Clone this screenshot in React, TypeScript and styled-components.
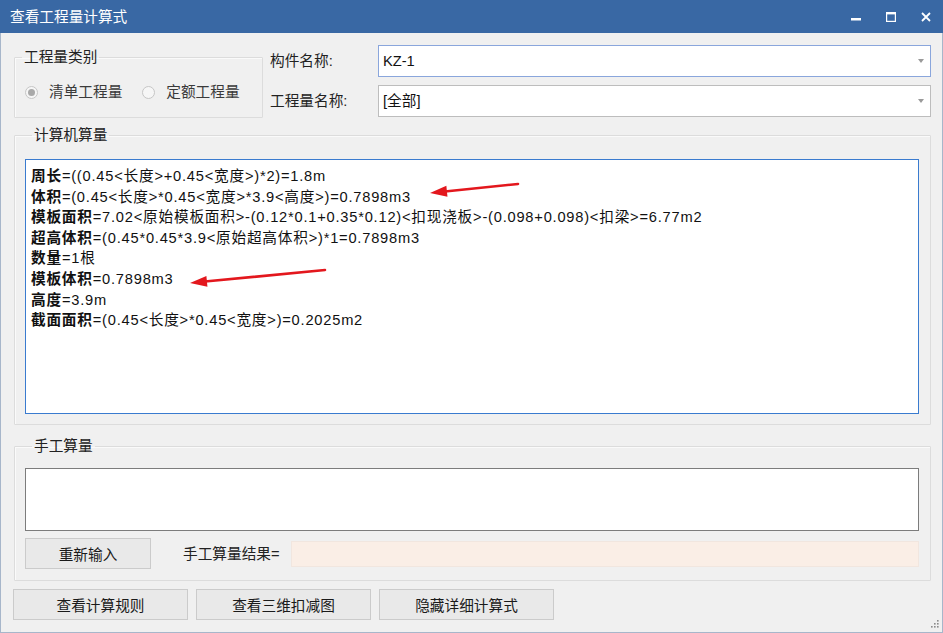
import React from "react";
import styled, { createGlobalStyle } from "styled-components";

const GlobalStyle = createGlobalStyle`
  html, body { margin: 0; padding: 0; background: #ffffff; }
  body {
    font-family: "Liberation Sans", "Noto Sans CJK SC", sans-serif;
    font-size: 14.67px;
    line-height: 20px;
    color: #1f1f1f;
  }
  * { box-sizing: border-box; }
`;

const Window = styled.div`
  position: relative;
  width: 943px;
  height: 633px;
  display: flex;
  flex-direction: column;
  overflow: hidden;
`;

const TitleBar = styled.div`
  height: 33px;
  flex: none;
  display: flex;
  align-items: center;
  background: #3968a4;
  color: #ffffff;
  padding: 0 12px 0 10px;
`;

const Title = styled.span`
  line-height: 18px;
  flex: 1;
`;

const Controls = styled.div`
  display: flex;
  align-items: center;
  gap: 25px;
  padding-top: 1px;
`;

const Body = styled.div`
  flex: 1;
  display: flex;
  flex-direction: column;
  background: #f0f0f0;
  border: 1px solid #a7b6ca;
  border-top: none;
  padding: 12px 11px 0 13px;
`;

const TopRow = styled.div`
  display: flex;
  align-items: flex-start;
`;

const Group = styled.fieldset<{ $w?: number; $h?: number }>`
  margin: 0;
  padding: 0;
  min-width: 0;
  width: ${(p) => (p.$w ? `${p.$w}px` : "auto")};
  ${(p) => (p.$h ? `height: ${p.$h}px;` : "")}
  border: 1px solid #dcdcdc;
  box-shadow: inset 1px 1px 0 #fafafa;
  border-radius: 1px;
`;

const KindGroup = styled(Group)`
  margin-top: 4px;
`;

const Legend = styled.legend`
  margin-left: 7px;
  padding: 0 2px;
  line-height: 16px;
  color: #222;
`;

const RadioRow = styled.div`
  display: flex;
  align-items: center;
  padding: 17px 0 0 10px;
  gap: 20px;
`;

const RadioItem = styled.label`
  display: flex;
  align-items: center;
  gap: 11px;
  color: #3a3a3a;
  line-height: 20px;
`;

const RadioDot = styled.span<{ $on?: boolean }>`
  width: 13px;
  height: 13px;
  border-radius: 50%;
  border: 1px solid #c6c6c6;
  background: #f6f6f6;
  display: flex;
  align-items: center;
  justify-content: center;
  &::after {
    content: "";
    width: 7px;
    height: 7px;
    border-radius: 50%;
    background: ${(p) => (p.$on ? "#a9a9a9" : "transparent")};
  }
`;

const Form = styled.div`
  flex: 1;
  margin-left: 7px;
  display: grid;
  grid-template-columns: 108px 1fr;
  grid-auto-rows: 32px;
  row-gap: 8px;
  align-items: center;
`;

const FieldLabel = styled.span`
  color: #222;
`;

const Combo = styled.div<{ $focus?: boolean }>`
  height: 100%;
  display: flex;
  align-items: center;
  background: #ffffff;
  border: 1px solid ${(p) => (p.$focus ? "#8aa6dc" : "#bdbdbd")};
  padding: 0 6px 0 4px;
  color: #111;
`;

const ComboText = styled.span`
  flex: 1;
`;

const Caret = styled.span`
  width: 0;
  height: 0;
  border-left: 3.5px solid transparent;
  border-right: 3.5px solid transparent;
  border-top: 4px solid #9a9a9a;
`;

const CalcGroup = styled(Group)`
  margin-top: 9px;
  padding: 0 11px 10px 10px;
`;

const CalcBox = styled.div`
  margin-top: 16px;
  height: 255px;
  background: #ffffff;
  border: 1px solid #3a7bcf;
  padding: 6px 5px;
  line-height: 20.6px;
  letter-spacing: 0.78px;
  color: #111;
  white-space: nowrap;
`;

const Line = styled.div``;

const Key = styled.b`
  font-weight: 700;
`;

const ManualGroup = styled(Group)`
  margin-top: 13px;
  padding: 0 11px 11px 10px;
`;

const ManualBox = styled.div`
  margin-top: 14px;
  height: 63px;
  background: #ffffff;
  border: 1px solid #7c7c7c;
`;

const ManualRow = styled.div`
  display: flex;
  align-items: center;
  margin-top: 7px;
`;

const Button = styled.button<{ $w: number }>`
  width: ${(p) => p.$w}px;
  height: 31px;
  background: #e9e9e9;
  border: 1px solid #cbcbcb;
  font-family: inherit;
  font-size: 14.67px;
  color: #1a1a1a;
  padding: 0;
`;

const ResultLabel = styled.span`
  margin-left: 32px;
  width: 108px;
  color: #222;
`;

const ResultField = styled.div`
  flex: 1;
  height: 26px;
  background: #faeee6;
  border: 1px solid #f1e6df;
`;

const Footer = styled.div`
  flex: 1;
  display: flex;
  align-items: flex-start;
  gap: 8px;
  margin: 8px 0 0 -1px;
`;

const Grip = styled.svg`
  margin-left: auto;
  align-self: flex-end;
  margin-bottom: 4px;
  margin-right: -8px;
`;

const Overlay = styled.svg`
  position: absolute;
  left: 0;
  top: 0;
  pointer-events: none;
`;

const formulas: [string, string][] = [
  ["周长", "=((0.45<长度>+0.45<宽度>)*2)=1.8m"],
  ["体积", "=(0.45<长度>*0.45<宽度>*3.9<高度>)=0.7898m3"],
  ["模板面积", "=7.02<原始模板面积>-(0.12*0.1+0.35*0.12)<扣现浇板>-(0.098+0.098)<扣梁>=6.77m2"],
  ["超高体积", "=(0.45*0.45*3.9<原始超高体积>)*1=0.7898m3"],
  ["数量", "=1根"],
  ["模板体积", "=0.7898m3"],
  ["高度", "=3.9m"],
  ["截面面积", "=(0.45<长度>*0.45<宽度>)=0.2025m2"],
];

function Arrow({ x1, y1, x2, y2 }: { x1: number; y1: number; x2: number; y2: number }) {
  const dx = x2 - x1;
  const dy = y2 - y1;
  const len = Math.hypot(dx, dy);
  const ux = dx / len;
  const uy = dy / len;
  const head = 17;
  const half = 5.5;
  const bx = x2 - ux * head;
  const by = y2 - uy * head;
  const pts = `${x2},${y2} ${bx - uy * half},${by + ux * half} ${bx + uy * half},${by - ux * half}`;
  return (
    <g>
      <line x1={x1} y1={y1} x2={bx + ux * 2} y2={by + uy * 2} stroke="#e3171d" strokeWidth={2.6} strokeLinecap="round" />
      <polygon points={pts} fill="#e3171d" />
    </g>
  );
}

export default function App() {
  return (
    <>
      <GlobalStyle />
      <Window>
        <TitleBar>
          <Title>查看工程量计算式</Title>
          <Controls>
            <svg width="10" height="10" viewBox="0 0 10 10">
              <rect x="0" y="6" width="10" height="2.5" fill="#fff" />
            </svg>
            <svg width="10" height="10" viewBox="0 0 10 10">
              <rect x="0.6" y="0.6" width="8.8" height="8.8" fill="none" stroke="#fff" strokeWidth="1.2" />
              <rect x="0" y="0" width="10" height="2.4" fill="#fff" />
            </svg>
            <svg width="10" height="10" viewBox="0 0 10 10">
              <path d="M1 1 L9 9 M9 1 L1 9" stroke="#fff" strokeWidth="1.8" />
            </svg>
          </Controls>
        </TitleBar>
        <Body>
          <TopRow>
            <KindGroup $w={249} $h={69}>
              <Legend>工程量类别</Legend>
              <RadioRow>
                <RadioItem>
                  <RadioDot $on />
                  清单工程量
                </RadioItem>
                <RadioItem>
                  <RadioDot />
                  定额工程量
                </RadioItem>
              </RadioRow>
            </KindGroup>
            <Form>
              <FieldLabel>构件名称:</FieldLabel>
              <Combo $focus>
                <ComboText>KZ-1</ComboText>
                <Caret />
              </Combo>
              <FieldLabel>工程量名称:</FieldLabel>
              <Combo>
                <ComboText>[全部]</ComboText>
                <Caret />
              </Combo>
            </Form>
          </TopRow>

          <CalcGroup>
            <Legend>计算机算量</Legend>
            <CalcBox>
              {formulas.map(([k, v]) => (
                <Line key={k}>
                  <Key>{k}</Key>
                  {v}
                </Line>
              ))}
            </CalcBox>
          </CalcGroup>

          <ManualGroup>
            <Legend>手工算量</Legend>
            <ManualBox />
            <ManualRow>
              <Button $w={126}>重新输入</Button>
              <ResultLabel>手工算量结果=</ResultLabel>
              <ResultField />
            </ManualRow>
          </ManualGroup>

          <Footer>
            <Button $w={175}>查看计算规则</Button>
            <Button $w={175}>查看三维扣减图</Button>
            <Button $w={175}>隐藏详细计算式</Button>
            <Grip width="10" height="10" viewBox="0 0 10 10">
              {[
                [8, 2],
                [8, 5],
                [5, 5],
                [8, 8],
                [5, 8],
                [2, 8],
              ].map(([x, y]) => (
                <rect key={`${x}-${y}`} x={x} y={y} width="1.6" height="1.6" fill="#8c8c8c" />
              ))}
            </Grip>
          </Footer>
        </Body>
        <Overlay width="943" height="633">
          <Arrow x1={518} y1={184} x2={430} y2={193} />
          <Arrow x1={325} y1={270} x2={190} y2={283} />
        </Overlay>
      </Window>
    </>
  );
}
